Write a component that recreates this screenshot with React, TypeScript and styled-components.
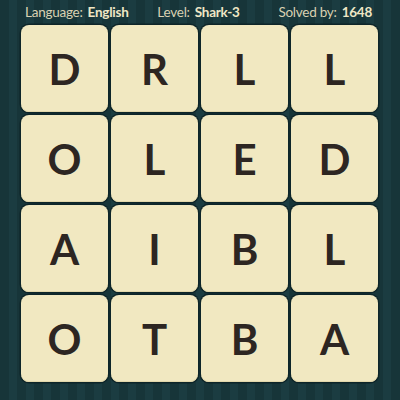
import React from "react";
import styled, { createGlobalStyle } from "styled-components";

const Global = createGlobalStyle`
  html, body { margin: 0; padding: 0; }
  body {
    width: 400px;
    height: 400px;
    overflow: hidden;
    background-color: #173539;
    background-image: repeating-linear-gradient(
      90deg,
      #173539 0px,
      #173539 9px,
      #1b3c41 9px,
      #1b3c41 17px
    );
  }
`;

const Page = styled.div`
  width: 400px;
  height: 400px;
  display: flex;
  flex-direction: column;
  font-family: Lato, "Open Sans", sans-serif;
`;

const Header = styled.div`
  height: 25px;
  display: grid;
  grid-template-columns: 1fr auto 1fr;
  align-items: center;
  padding: 0 28px 0 25px;
  box-sizing: border-box;
  color: #e6ddbd;
  font-size: 13.5px;
  letter-spacing: -0.25px;
`;

const Stat = styled.div<{ $align: "start" | "center" | "end" }>`
  display: flex;
  gap: 5px;
  padding-bottom: 2px;
  justify-self: ${(p) => p.$align};
`;

const Label = styled.span`
  font-weight: 400;
  color: #d9d1b2;
`;

const Value = styled.span`
  font-weight: 700;
  color: #efe7c6;
`;

const Grid = styled.div`
  margin-left: 21px;
  display: grid;
  grid-template-columns: repeat(4, 87px);
  grid-auto-rows: 87px;
  gap: 3px;
`;

const Tile = styled.div`
  background: #f1e8c1;
  border-radius: 8px;
  box-shadow: 0 0 0 1.5px #0e2529, inset 0 -1px 0 #e2d7ab;
  display: flex;
  align-items: center;
  justify-content: center;
  color: #2d2622;
  font-family: Lato, "Open Sans", sans-serif;
  font-weight: 700;
  font-size: 42px;
  line-height: 1;
  box-sizing: border-box;
`;

const letters = [
  "D", "R", "L", "L",
  "O", "L", "E", "D",
  "A", "I", "B", "L",
  "O", "T", "B", "A",
];

export default function App() {
  return (
    <>
      <Global />
      <Page>
        <Header>
          <Stat $align="start">
            <Label>Language:</Label>
            <Value>English</Value>
          </Stat>
          <Stat $align="center">
            <Label>Level:</Label>
            <Value>Shark-3</Value>
          </Stat>
          <Stat $align="end">
            <Label>Solved by:</Label>
            <Value>1648</Value>
          </Stat>
        </Header>
        <Grid>
          {letters.map((l, i) => (
            <Tile key={i}>{l}</Tile>
          ))}
        </Grid>
      </Page>
    </>
  );
}
